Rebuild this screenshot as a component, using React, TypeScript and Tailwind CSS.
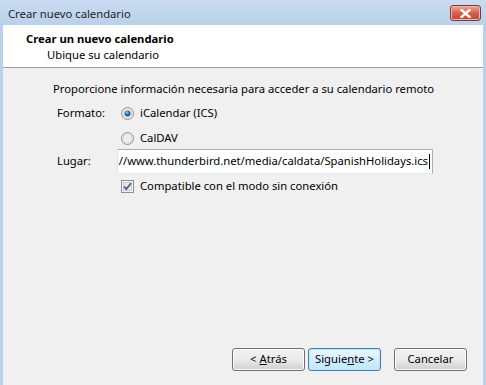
import React from 'react';

const font = { fontFamily: '"Noto Sans", "Open Sans", sans-serif' };

const Radio = ({ checked }: { checked?: boolean }) => (
  <svg width="13" height="13" viewBox="0 0 13 13" className="shrink-0">
    <defs>
      <radialGradient id="rb" cx="50%" cy="50%" r="50%">
        <stop offset="0%" stopColor="#e8e8e8" />
        <stop offset="100%" stopColor="#f8f8f8" />
      </radialGradient>
      <radialGradient id="rd" cx="40%" cy="35%" r="60%">
        <stop offset="0%" stopColor="#9bd4f6" />
        <stop offset="60%" stopColor="#2b69b3" />
        <stop offset="100%" stopColor="#1c4d8b" />
      </radialGradient>
    </defs>
    <circle cx="6.5" cy="6.5" r="6" fill="url(#rb)" stroke="#8f8f8f" strokeWidth="1" />
    <circle cx="6.5" cy="6.5" r="4.5" fill="none" stroke="#d0d0d0" strokeWidth="1" />
    {checked && <circle cx="6.5" cy="6.5" r="3" fill="url(#rd)" />}
  </svg>
);

const Checkbox = () => (
  <svg width="13" height="13" viewBox="0 0 13 13" className="shrink-0">
    <rect x="0.5" y="0.5" width="12" height="12" fill="#f4f4f4" stroke="#8e8f8f" />
    <rect x="2.5" y="2.5" width="8" height="8" fill="#e6e8ec" stroke="#c9ccd2" />
    <path d="M3 6.5 L5.3 9 L10 3.2" fill="none" stroke="#4a5f97" strokeWidth="1.8" />
  </svg>
);

const Button = ({ children, focused }: { children: React.ReactNode; focused?: boolean }) => (
  <button
    className={`h-[23px] w-[73px] rounded-[3px] border text-[11.25px] text-black ${
      focused
        ? 'border-[#3c7fb1] bg-gradient-to-b from-[#eaf6fd] to-[#bee6fd] shadow-[inset_0_0_0_1px_#c2e4f6]'
        : 'border-[#707070] bg-gradient-to-b from-[#f2f2f2] via-[#ebebeb] to-[#cfcfcf] shadow-[inset_0_0_0_1px_#fcfcfc]'
    }`}
    style={font}
  >
    {children}
  </button>
);

export default function App() {
  return (
    <div className="flex h-[385px] w-[486px] flex-col bg-[#b9d1ea] text-[11.25px] text-black" style={font}>
      {/* title bar */}
      <div className="flex h-[25px] shrink-0 items-start justify-between bg-gradient-to-b from-[#c9dcf1] to-[#b9d1ea] pl-[8px] pr-[5px]">
        <span className="mt-[6px] text-[11.25px] leading-[16px] text-[#1e1e1e]">Crear nuevo calendario</span>
        <div className="mt-[5px] flex h-[16px] w-[31px] items-center justify-center rounded-[3px] border border-[#7d3a34] bg-gradient-to-b from-[#e9a99c] via-[#d2624f] to-[#c3432f] shadow-[inset_0_0_0_1px_#f0b8ad]">
          <svg width="11" height="9" viewBox="0 0 11 9">
            <path d="M1.5 1 L9.5 8 M9.5 1 L1.5 8" stroke="#fff" strokeWidth="2.4" strokeLinecap="square" />
          </svg>
        </div>
      </div>

      <div className="mx-[3px] flex flex-1 flex-col bg-[#f0f0f0]">
        {/* header */}
        <div className="flex h-[43px] shrink-0 flex-col border-b border-[#a0a0a0] bg-white pl-[23px] pt-[6px] leading-[16px]">
          <span className="font-bold">Crear un nuevo calendario</span>
          <span className="pl-[21px]">Ubique su calendario</span>
        </div>

        {/* body */}
        <div className="flex flex-1 flex-col pl-[50px] pt-[13px]">
          <div className="h-[16px] leading-[16px]">
            Proporcione información necesaria para acceder a su calendario remoto
          </div>

          <div className="mt-[8px] flex h-[16px] items-center pl-[4px]">
            <span className="w-[64px]">Formato:</span>
            <div className="flex items-center gap-[6px]">
              <Radio checked />
              <span>iCalendar (ICS)</span>
            </div>
          </div>

          <div className="mt-[9px] flex h-[16px] items-center pl-[68px]">
            <div className="flex items-center gap-[6px]">
              <Radio />
              <span>CalDAV</span>
            </div>
          </div>

          <div className="mt-[3px] flex h-[25px] items-center pl-[4px]">
            <span className="w-[60px]">Lugar:</span>
            <div className="flex h-[25px] w-[316px] items-center justify-end overflow-hidden border border-[#abadb3] border-b-[#e3e9ef] border-l-[#e2e3ea] bg-white pr-[2px]">
              <span className="flex shrink-0 items-center whitespace-nowrap">
                http://www.thunderbird.net/media/caldata/SpanishHolidays.ics
                <span className="ml-[1px] inline-block h-[15px] w-[1px] bg-black" />
              </span>
            </div>
          </div>

          <div className="mt-[4px] flex h-[16px] items-center pl-[68px]">
            <div className="flex items-center gap-[6px]">
              <Checkbox />
              <span>Compatible con el modo sin conexión</span>
            </div>
          </div>

          <div className="mb-[14px] mt-auto flex items-center justify-end pr-[16px]">
            <div className="flex gap-[3px]">
              <Button>
                &lt; <span className="underline">A</span>trás
              </Button>
              <Button focused>
                Siguie<span className="underline">n</span>te &gt;
              </Button>
            </div>
            <div className="ml-[13px]">
              <Button>Cancelar</Button>
            </div>
          </div>
        </div>
      </div>
    </div>
  );
}
